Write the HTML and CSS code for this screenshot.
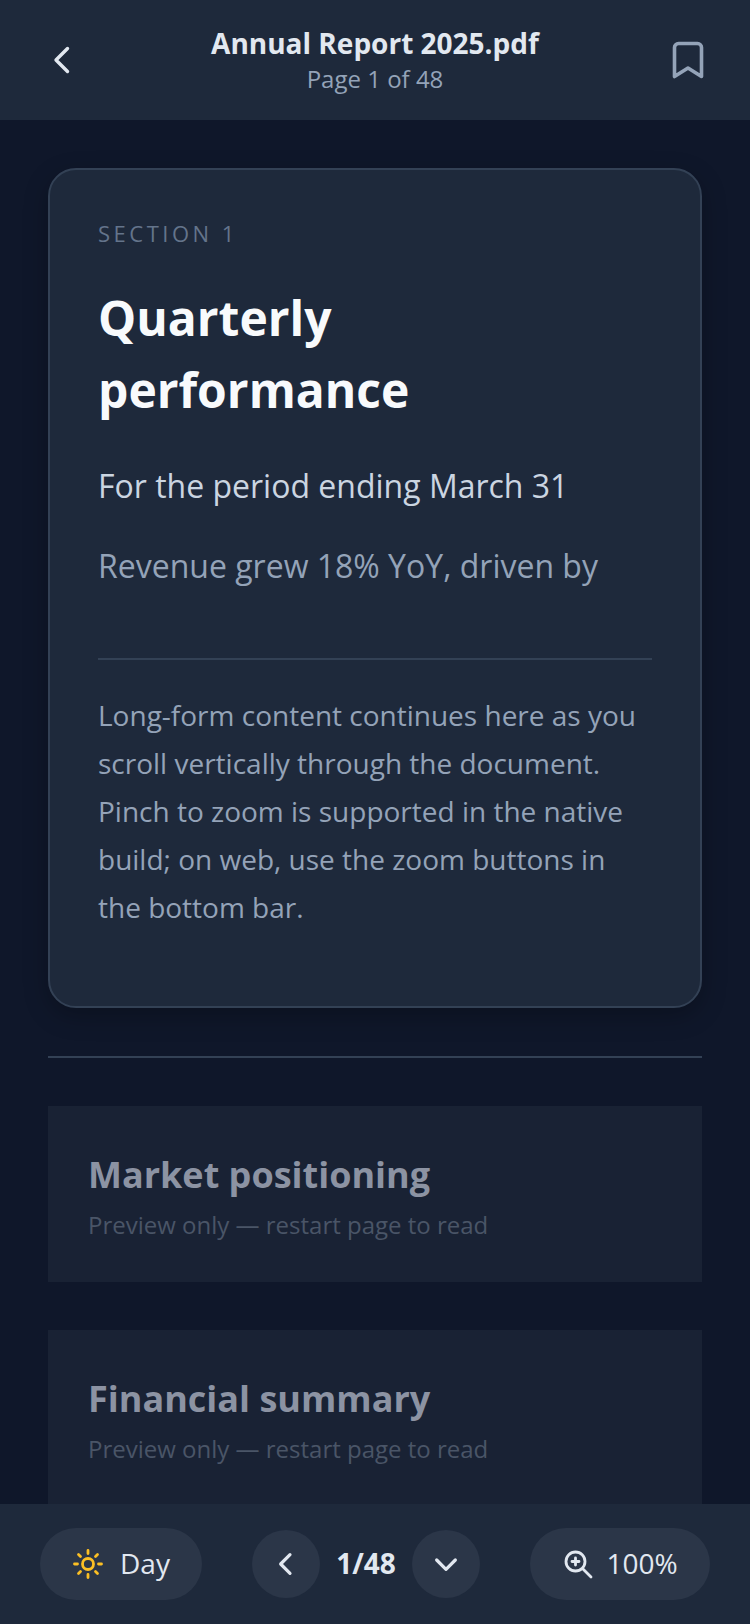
FILE: index.html
```html
<!DOCTYPE html>
<html>
<head>
  <title>Annual Report 2025.pdf</title>
  <link rel="stylesheet" href="styles.css">
</head>
<body>
  <div class="app">
    <div class="top-bar">
      <button class="icon-btn">
        <svg width="40" height="40" viewBox="0 0 40 40" fill="none" stroke="#e2e8f0" stroke-width="3.4" stroke-linecap="round" stroke-linejoin="round"><path d="M27.5 8.500L16 20l11.500 11.500"/></svg>
      </button>
      <div class="doc-title">
        <h1>Annual Report 2025.pdf</h1>
        <p>Page 1 of 48</p>
      </div>
      <button class="icon-btn">
        <svg width="40" height="40" viewBox="0 0 40 40" fill="none" stroke="#94a3b8" stroke-width="3.6" stroke-linecap="round" stroke-linejoin="round"><path d="M31.500 36.500L18 28 4.500 36.500V7.500a4 4 0 0 1 4-4h19a4 4 0 0 1 4 4z"/></svg>
      </button>
    </div>

    <div class="content">
      <div class="page-card">
        <div class="section-label">SECTION 1</div>
        <h2>Quarterly performance</h2>
        <p class="period">For the period ending March 31</p>
        <p class="lead">Revenue grew 18% YoY, driven by</p>
        <div class="card-rule"></div>
        <p class="long-text">Long-form content continues here as you scroll vertically through the document. Pinch to zoom is supported in the native build; on web, use the zoom buttons in the bottom bar.</p>
      </div>

      <div class="page-rule"></div>

      <div class="preview">
        <h3>Market positioning</h3>
        <p>Preview only — restart page to read</p>
      </div>
      <div class="preview">
        <h3>Financial summary</h3>
        <p>Preview only — restart page to read</p>
      </div>
    </div>

    <div class="bottom-bar">
      <button class="pill day-pill">
        <svg width="32" height="32" viewBox="0 0 32 32" fill="none" stroke="#fbbf24" stroke-width="2.800" stroke-linecap="round"><circle cx="16" cy="16" r="5.500"/><path d="M16 2.500v3M16 26.500v3M2.500 16h3M26.500 16h3M6.500 6.500l2 2M23.500 23.500l2 2M6.500 25.500l2-2M23.500 8.500l2-2"/></svg>
        <span>Day</span>
      </button>
      <div class="pager">
        <button class="circle">
          <svg width="32" height="32" viewBox="0 0 24 24" fill="none" stroke="#e2e8f0" stroke-width="2.400" stroke-linecap="round" stroke-linejoin="round"><path d="M15 5l-7 7 7 7"/></svg>
        </button>
        <span class="count">1/48</span>
        <button class="circle">
          <svg width="32" height="32" viewBox="0 0 24 24" fill="none" stroke="#e2e8f0" stroke-width="2.400" stroke-linecap="round" stroke-linejoin="round"><path d="M5 9l7 7 7-7"/></svg>
        </button>
      </div>
      <button class="pill zoom-pill">
        <svg width="32" height="32" viewBox="0 0 32 32" fill="none" stroke="#e2e8f0" stroke-width="2.800" stroke-linecap="round"><circle cx="13.500" cy="13.500" r="9.500"/><path d="M21 21l8 8M13.500 10v7M10 13.500h7"/></svg>
        <span>100%</span>
      </button>
    </div>
  </div>
</body>
</html>
```

FILE: styles.css
```css
* {
  box-sizing: border-box;
}

body {
  margin: 0;
  background-color: #0f172a;
  font-family: "Open Sans", sans-serif;
}

button {
  font-family: inherit;
  border: none;
  padding: 0;
  background: none;
}

.app {
  display: flex;
  flex-direction: column;
  height: 1624px;
  overflow: hidden;
}

.top-bar {
  display: flex;
  align-items: center;
  justify-content: space-between;
  flex: none;
  height: 120px;
  padding: 0 40px;
  background-color: #1e293b;
}

.icon-btn {
  display: flex;
  width: 40px;
  height: 40px;
}

.doc-title {
  padding-bottom: 1px;
  text-align: center;
}

.doc-title h1 {
  margin: 0;
  font-size: 28px;
  line-height: 38px;
  font-weight: 700;
  color: #e2e8f0;
}

.doc-title p {
  margin: 1px 0 0;
  font-size: 24px;
  line-height: 32px;
  color: #94a3b8;
}

.content {
  flex: 1;
  min-height: 0;
  overflow: hidden;
  padding: 48px 48px 0;
}

.page-card {
  padding: 48px 48px 75px;
  background-color: #1e293b;
  border: 2px solid #334155;
  border-radius: 28px;
  box-shadow: 0 8px 24px rgba(0, 0, 0, 0.25);
}

.section-label {
  font-size: 22px;
  line-height: 30px;
  letter-spacing: 3.5px;
  color: #64748b;
}

.page-card h2 {
  margin: 34px 0 0;
  font-size: 48px;
  line-height: 72px;
  font-weight: 700;
  color: #f8fafc;
}

.period {
  margin: 38px 0 0;
  font-size: 32px;
  line-height: 44px;
  color: #cbd5e1;
}

.lead {
  margin: 36px 0 0;
  font-size: 32px;
  line-height: 44px;
  color: #94a3b8;
}

.card-rule {
  height: 2px;
  margin: 70px 0 31px;
  background-color: #334155;
}

.long-text {
  margin: 0;
  font-size: 28px;
  line-height: 48px;
  color: #94a3b8;
}

.page-rule {
  height: 2px;
  margin: 48px 0;
  background-color: #334155;
}

.preview {
  height: 176px;
  margin-bottom: 48px;
  padding: 44px 40px 0;
  background-color: #192234;
}

.preview:last-child {
  height: 240px;
}

.preview h3 {
  margin: 0;
  font-size: 36px;
  line-height: 50px;
  font-weight: 700;
  color: #8c93a3;
}

.preview p {
  margin: 2px 0 0;
  font-size: 24px;
  line-height: 46px;
  color: #4a5567;
}

.bottom-bar {
  display: flex;
  align-items: center;
  justify-content: space-between;
  flex: none;
  height: 120px;
  padding: 0 40px;
  background-color: #1e293b;
}

.pill {
  display: flex;
  align-items: center;
  justify-content: center;
  gap: 16px;
  height: 72px;
  border-radius: 36px;
  background-color: #2b3648;
  font-size: 28px;
  color: #e2e8f0;
}

.pill span {
  padding-bottom: 2px;
}

.day-pill {
  width: 162px;
}

.zoom-pill {
  width: 180px;
  gap: 12px;
}

.pager {
  display: flex;
  align-items: center;
}

.circle {
  display: flex;
  align-items: center;
  justify-content: center;
  width: 68px;
  height: 68px;
  border-radius: 50%;
  background-color: #2b3648;
}

.count {
  width: 92px;
  padding-bottom: 2px;
  text-align: center;
  font-size: 28px;
  font-weight: 700;
  color: #e2e8f0;
}
```
